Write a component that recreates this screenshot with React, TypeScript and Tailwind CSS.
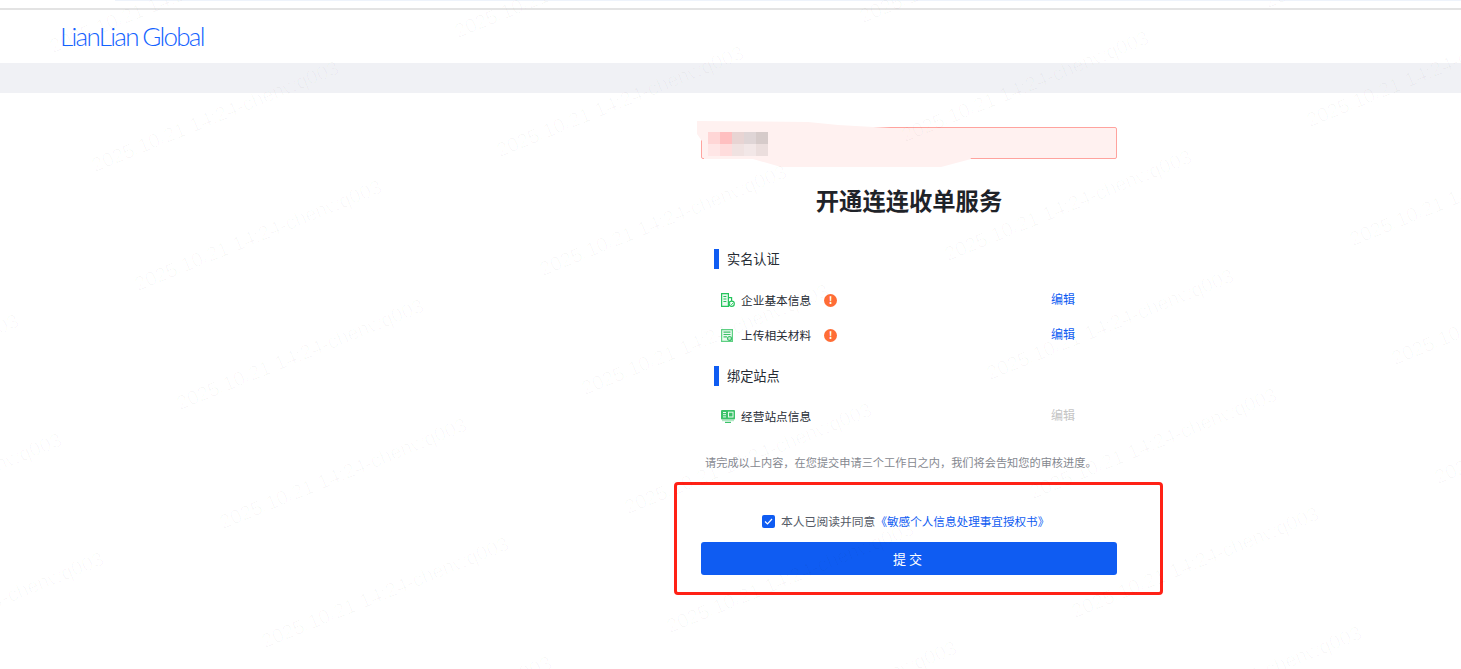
import type { ReactNode } from "react";

const FONT = '"Noto Sans CJK SC", "Liberation Sans", sans-serif';

const marks: [number, number][] = [];
for (let c = -1; c < 5; c++) {
  for (let r = -2; r < 6; r++) {
    marks.push([96 + c * 405 + r * 42.500, 155 - c * 15 + r * 119]);
  }
}

function Watermarks() {
  return (
    <div className="absolute inset-0 z-10 overflow-hidden pointer-events-none">
      {marks.map(([x, y], i) => (
        <span
          key={i}
          className="absolute origin-bottom-left -rotate-[22deg] whitespace-nowrap font-['Liberation_Sans',sans-serif] text-[20px] leading-none text-[rgba(0,0,0,0.028)]"
          style={{ left: x, top: y }}
        >
          2025/10/21 14:24-chenwq003
        </span>
      ))}
    </div>
  );
}

function IconBuilding() {
  return (
    <svg width="14" height="14" viewBox="0 0 14 14" fill="none" stroke="#25c45c" strokeWidth="1.200">
      <path d="M.6.6h6.800v12.800h-6.800z" fill="#eafaf0" />
      <path d="M7.400 4.600h3.200v3.400" />
      <path d="M2.400 3.500h3M2.400 6h3M2.400 8.500h3" />
      <circle cx="10.700" cy="10.700" r="2.600" fill="#fff" />
      <path d="M9.500 10.700l1 1 1.500-1.700" strokeWidth=".9" />
    </svg>
  );
}

function IconDoc() {
  return (
    <svg width="12" height="13" viewBox="0 0 12 13" fill="none" stroke="#5fd083" strokeWidth="1.200">
      <path d="M.6.6h10.800v11.800h-10.800z" fill="#eafaf0" />
      <path d="M2.500 3.200h7M2.500 5.500h7M2.500 7.800h3.500" stroke="#3cc26a" />
      <circle cx="8.500" cy="9.500" r="2" fill="#bdebcc" stroke="#3cc26a" />
    </svg>
  );
}

function IconScreen() {
  return (
    <svg width="14" height="13" viewBox="0 0 14 13" fill="none">
      <rect x="0" y="0" width="14" height="9.500" rx="1" fill="#3cc26a" />
      <path d="M2 2.500h3M2 4.700h3M2 6.900h3" stroke="#e9fbef" />
      <rect x="7.500" y="2.200" width="4.500" height="4.800" stroke="#e9fbef" />
      <path d="M1 10.700h12" stroke="#9fe3b7" />
      <path d="M4 12.400h6" stroke="#3cc26a" strokeWidth="1.200" />
    </svg>
  );
}

function Warn() {
  return (
    <span className="ml-[13px] flex h-[13px] w-[13px] items-center justify-center rounded-full bg-[#ff6d36] text-[10px] font-bold leading-none text-white">
      !
    </span>
  );
}

function Section({ title }: { title: string }) {
  return (
    <div className="flex h-5 items-center">
      <span className="h-5 w-[5px] bg-[#0f5cf2]" />
      <span className="ml-2 text-[13.200px] leading-5 text-[#262b33]">{title}</span>
    </div>
  );
}

function Row({
  icon,
  label,
  warn,
  disabled,
}: {
  icon: ReactNode;
  label: string;
  warn?: boolean;
  disabled?: boolean;
}) {
  return (
    <div className="flex h-5 items-center pl-[6px]">
      <span className="flex w-[21px] items-center pl-[1px]">{icon}</span>
      <span className="text-[11.700px] leading-5 text-[#262b33]">{label}</span>
      {warn && <Warn />}
      <span
        className={
          disabled
            ? "mb-[2px] ml-auto mr-[42px] text-[12px] leading-5 text-[#c4c4c4]"
            : "mb-[2px] ml-auto mr-[42px] text-[12px] leading-5 text-[#0f5cf2]"
        }
      >
        编辑
      </span>
    </div>
  );
}

function Redaction() {
  return (
    <svg
      className="absolute -left-[6px] -top-[8px] overflow-visible"
      width="280"
      height="48"
      viewBox="0 0 280 48"
    >
      <path
        d="M1 1L112 2L142 5L195 8L270 8L270 30L275 39L245 47L85 47L57 39L8 39L8 24L1 14Z"
        fill="#fff1f0"
      />
    </svg>
  );
}

export default function App() {
  return (
    <div className="relative h-[669px] overflow-hidden bg-white" style={{ fontFamily: FONT }}>
      <div className="flex h-[63px] flex-col">
        <div className="ml-[115px] h-px shrink-0 bg-[#eef3fb]" />
        <div className="h-[7px] shrink-0" />
        <div className="h-[2px] shrink-0 bg-[#e3e3e3]" />
        <div className="flex flex-1 items-center pb-[2px] pl-[60px]">
          <span className="font-['Lato',sans-serif] text-[26px] font-light leading-none tracking-[-1.700px] text-[#1463ff] [word-spacing:-1px]">
            LianLian Global
          </span>
        </div>
      </div>
      <div className="h-[30px] bg-[#f0f1f5]" />
      <main className="ml-[701px] flex w-[416px] flex-col">
        <div className="relative mt-[34px] h-8 rounded-[2px] border border-[#ffa39e] bg-[#fff1f0]">
          <Redaction />
          <div className="absolute left-[6px] top-[4px] grid grid-cols-5">
            {["#ffd6d6", "#ffbfc0", "#e8d4d3", "#dfd5d6", "#d6cbca", "#ffe6e6", "#ffdcdc", "#f0e2e1", "#f2e7e7", "#ebdedd"].map((c) => (
              <span key={c} className="h-3 w-3" style={{ background: c }} />
            ))}
          </div>
        </div>
        <h1 className="mt-[24px] text-center text-[23.300px] font-bold leading-[34px] text-[#1f2329]">开通连连收单服务</h1>
        <div className="mt-[32px] flex flex-col pl-[13px]">
          <Section title="实名认证" />
          <div className="mt-[21px]">
            <Row icon={<IconBuilding />} label="企业基本信息" warn />
          </div>
          <div className="mt-[15px]">
            <Row icon={<IconDoc />} label="上传相关材料" warn />
          </div>
          <div className="mt-[21px]">
            <Section title="绑定站点" />
          </div>
          <div className="mt-[20px]">
            <Row icon={<IconScreen />} label="经营站点信息" disabled />
          </div>
        </div>
        <p className="mt-[26px] whitespace-nowrap pl-[4px] text-[11.200px] leading-5 text-[#85888f]">
          请完成以上内容，在您提交申请三个工作日之内，我们将会告知您的审核进度。
        </p>
        <div className="-ml-[27px] mt-[10px] h-[113px] w-[489px] rounded-[4px] border-[3px] border-[#ff2116] pl-[24px]">
          <div className="mt-[26px] flex items-center pl-[61px]">
            <span className="flex h-[13px] w-[13px] items-center justify-center rounded-[2px] bg-[#0f5cf2]">
              <svg width="9" height="7" viewBox="0 0 9 7" fill="none" stroke="#fff" strokeWidth="1.200">
                <path d="M1 3.500l2.500 2.500 4.500-5" />
              </svg>
            </span>
            <span className="ml-[6px] whitespace-nowrap text-[11.800px] leading-5 text-[#555b66]">本人已阅读并同意</span>
            <span className="whitespace-nowrap text-[11.600px] leading-5 text-[#0f5cf2]">《敏感个人信息处理事宜授权书》</span>
          </div>
          <button className="mt-[11px] h-[33px] w-[416px] rounded-[3px] bg-[#0f5cf2] text-[13px] tracking-[3px] text-white">
            提交
          </button>
        </div>
      </main>
      <Watermarks />
    </div>
  );
}
